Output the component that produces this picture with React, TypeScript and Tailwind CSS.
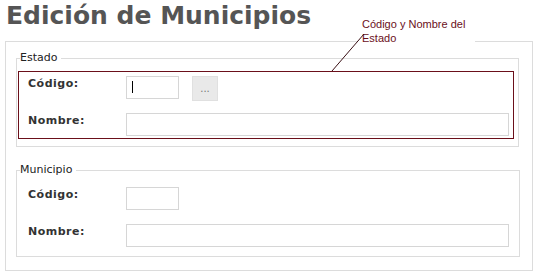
const verdana = "font-['DejaVu_Sans',Verdana,sans-serif]";

function Field({ label, wide, dots }: { label: string; wide?: boolean; dots?: boolean }) {
  return (
    <div className="flex items-start">
      <label className="w-[98px] shrink-0 pt-[1px] text-[11px] leading-[14px] font-bold text-[#333] tracking-[0.5px]">
        {label}
      </label>
      <div
        className={
          "h-[23px] border border-[#d6d6d6] bg-white " + (wide ? "w-[383px]" : "w-[53px]")
        }
      />
      {dots && (
        <button className="ml-[13px] flex h-[25px] w-[26px] items-center justify-center border border-[#e0e0e0] bg-[#e9e9e9] text-[10px] leading-none text-[#777]">
          ...
        </button>
      )}
    </div>
  );
}

export default function App() {
  return (
    <div className={"relative h-[280px] w-[539px] overflow-hidden bg-white " + verdana}>
      <h1 className="mt-[4px] pl-[6px] text-[25px] leading-[24px] font-bold text-[#555]">
        Edición de Municipios
      </h1>

      <div className="ml-[5px] mt-[13px] h-[230px] w-[528px] border border-[#dcdcdc] pl-[10px]">
        <fieldset className="mt-[9px] w-[503px] border border-[#dcdcdc] px-[1px] pb-[7px] pt-[6px]">
          <legend className="ml-[2px] pr-[4px] text-[11px] leading-[14px] text-[#222]">Estado</legend>
          <div className="relative w-[496px] border border-[#6b0f1a] pl-[9px] pr-[4px] pt-[4px] pb-[2px]">
            <Field label="Código:" dots />
            <div className="mt-[12px]">
              <Field label="Nombre:" wide />
            </div>
            <span className="absolute left-[113px] top-[9px] h-[12px] w-px bg-black" />
          </div>
        </fieldset>

        <fieldset className="mt-[16px] w-[504px] border border-[#dcdcdc] px-[1px] pb-[9px] pt-[10px]">
          <legend className="ml-[2px] pr-[4px] text-[11px] leading-[14px] text-[#222]">Municipio</legend>
          <div className="pl-[10px]">
            <Field label="Código:" />
            <div className="mt-[14px]">
              <Field label="Nombre:" wide />
            </div>
          </div>
        </fieldset>
      </div>

      {/* callout */}
      <div className="absolute left-[358px] top-[17px] w-[117px] bg-white pl-[4px] pb-[2px] font-['Liberation_Sans',Arial,sans-serif] text-[11px] leading-[14px] text-[#6b0f1a]">
        Código y Nombre del
        <br />
        Estado
      </div>
      <svg className="absolute left-0 top-0" width="539" height="280">
        <line x1="364" y1="34" x2="332" y2="71" stroke="#3a1015" strokeWidth="1" />
      </svg>
    </div>
  );
}
